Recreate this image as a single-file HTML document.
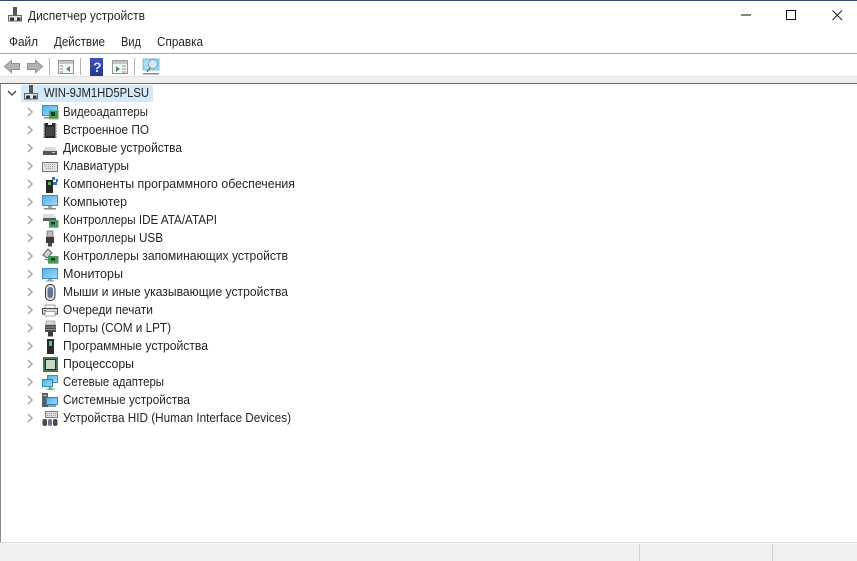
<!DOCTYPE html>
<html><head><meta charset="utf-8"><style>
html,body{margin:0;padding:0;background:#fff;width:857px;height:561px;overflow:hidden}
svg{display:block}
text{font-family:"Liberation Sans","DejaVu Sans",sans-serif;font-size:12.5px;fill:#262626}
.ic{filter:blur(.3px)}
</style></head><body>
<svg width="857" height="561" viewBox="0 0 857 561" xmlns="http://www.w3.org/2000/svg">
<defs>
<linearGradient id="scr" x1="0" y1="0" x2="1" y2="1"><stop offset="0" stop-color="#4fb0e6"/><stop offset="1" stop-color="#a4dcf5"/></linearGradient>
<linearGradient id="hlp" x1="0" y1="0" x2="0" y2="1"><stop offset="0" stop-color="#3c55b8"/><stop offset="1" stop-color="#26368c"/></linearGradient>
</defs>
<rect width="857" height="561" fill="#fff"/>
<rect width="857" height="1" fill="#2f4f72"/>
<!-- title icon -->
<g class="ic"><rect x="13" y="7" width="4" height="8" fill="#555"/><rect x="8.500" y="15.500" width="13" height="5.500" fill="#e4e4e4" stroke="#666"/><rect x="10" y="17.500" width="4" height="3" fill="#333"/><rect x="17" y="17.500" width="3.500" height="3" fill="#333"/></g>
<text x="28" y="20" textLength="117" lengthAdjust="spacingAndGlyphs">Диспетчер устройств</text>
<!-- window buttons -->
<rect x="741" y="14.500" width="10" height="1" fill="#111"/>
<rect x="786.500" y="10.500" width="9" height="9" fill="none" stroke="#111"/>
<path d="M832.500 10.500l9.500 9.500M842 10.500l-9.500 9.500" stroke="#222" fill="none"/>
<!-- menu -->
<text x="9" y="46" textLength="29" lengthAdjust="spacingAndGlyphs">Файл</text>
<text x="54" y="46" textLength="51" lengthAdjust="spacingAndGlyphs">Действие</text>
<text x="121" y="46" textLength="20" lengthAdjust="spacingAndGlyphs">Вид</text>
<text x="157" y="46" textLength="46" lengthAdjust="spacingAndGlyphs">Справка</text>
<rect y="53" width="857" height="1" fill="#a8a8a8"/>
<!-- toolbar -->
<g class="ic">
<path d="M4.500 66.500l7-6v3h8v6h-8v3z" fill="#b2b2b2" stroke="#8f8f8f"/>
<path d="M42.500 66.500l-7-6v3h-8v6h8v3z" fill="#b2b2b2" stroke="#8f8f8f"/>
<rect x="58.500" y="60.500" width="15" height="13" fill="#f6f6f6" stroke="#949494"/><rect x="59" y="61" width="14" height="3" fill="#bcc8cc"/><path d="M70 66l-4 3 4 3z" fill="#3f9a45"/><path d="M60 66h3M60 69h3M60 72h3" stroke="#8f8f8f"/>
<rect x="90" y="58" width="13" height="18" fill="url(#hlp)"/>
<rect x="112.500" y="60.500" width="15" height="13" fill="#f6f6f6" stroke="#949494"/><rect x="113" y="61" width="14" height="3" fill="#bcc8cc"/><path d="M116 66l4 3-4 3z" fill="#3f9a45"/><path d="M122 66h4M122 69h4M122 72h4" stroke="#8f8f8f"/>
<rect x="143" y="59" width="16" height="11" fill="#a5dcf2" stroke="#5ab0d8" stroke-width=".8"/>
<circle cx="153" cy="64" r="4.500" fill="#cfeaf4" stroke="#8aa6b0"/><path d="M150 68l-3 4" stroke="#666" stroke-width="1.300"/><rect x="143" y="73" width="16" height="1.500" fill="#8a8a8a"/>
</g>
<rect x="49" y="58" width="1" height="17" fill="#b0b0b0"/>
<rect x="80" y="58" width="1" height="17" fill="#b0b0b0"/>
<rect x="134" y="58" width="1" height="17" fill="#b0b0b0"/>
<text x="93" y="72" style="font-size:14px;font-weight:bold;fill:#dfe5ff">?</text>
<!-- band below toolbar -->
<rect y="76" width="857" height="7" fill="#f0f0f0"/>
<rect y="76" width="857" height="1" fill="#e2e2e2"/>
<rect y="83" width="857" height="1" fill="#6a6a6a"/>
<rect x="0" y="84" width="1" height="458" fill="#8a8a8a"/>
<!-- root -->
<rect x="21" y="85" width="132" height="17" fill="#d3e8f8"/>
<path d="M8 91l4 4 4-4" fill="none" stroke="#444" stroke-width="1.300"/>
<g class="ic" transform="translate(16,78)"><rect x="13" y="7" width="4" height="8" fill="#555"/><rect x="8.500" y="15.500" width="13" height="5.500" fill="#e4e4e4" stroke="#666"/><rect x="10" y="17.500" width="4" height="3" fill="#333"/><rect x="17" y="17.500" width="3.500" height="3" fill="#333"/></g>
<text x="44" y="97" textLength="105" lengthAdjust="spacingAndGlyphs">WIN-9JM1HD5PLSU</text>
<!-- chevrons -->
<path fill="none" stroke="#a6a6a6" stroke-width="1.500" d="M28 108l4 4-4 4M28 126l4 4-4 4M28 144l4 4-4 4M28 162l4 4-4 4M28 180l4 4-4 4M28 198l4 4-4 4M28 216l4 4-4 4M28 234l4 4-4 4M28 252l4 4-4 4M28 270l4 4-4 4M28 288l4 4-4 4M28 306l4 4-4 4M28 324l4 4-4 4M28 342l4 4-4 4M28 360l4 4-4 4M28 378l4 4-4 4M28 396l4 4-4 4M28 414l4 4-4 4"/>
<!-- icons -->
<g class="ic">
<g transform="translate(42,104)"><rect x=".5" y="1.500" width="15" height="10" fill="url(#scr)" stroke="#3d8fc0"/><rect x="2" y="13" width="8" height="1.500" fill="#8a8a8a"/><rect x="7" y="6.500" width="9.500" height="8" fill="#4a9a60"/><rect x="9" y="8" width="4" height="4" fill="#1c3a22"/><rect x="7" y="14.500" width="9.500" height="1" fill="#c9a94a"/></g>
<g transform="translate(42,122)"><rect x="2.500" y="1" width="11" height="15" fill="#2a2a2a"/><path d="M6 1h4v2H6z" fill="#eee"/><path d="M1 3h2M1 6h2M1 9h2M1 12h2M1 15h2M13 3h2M13 6h2M13 9h2M13 12h2M13 15h2" stroke="#777"/><rect x="4" y="5" width="8" height="9" fill="#444"/></g>
<g transform="translate(42,140)"><path d="M3 7h10l2 4v3H1v-3z" fill="#dcdcdc"/><rect x="1" y="11" width="14" height="4" fill="#555"/><rect x="10" y="12" width="3" height="1" fill="#a8e8a8"/></g>
<g transform="translate(42,158)"><rect x=".5" y="4.500" width="15" height="9" fill="#e2e2e2" stroke="#7c7c7c"/><path d="M2 6.500h12M2 8.500h12M4 10.500h8" stroke="#a4a4a4" stroke-dasharray="1 1"/></g>
<g transform="translate(42,176)"><rect x="4" y="4" width="7" height="13" fill="#2a2a2a"/><rect x="6" y="6" width="3" height="3" fill="#5fb16a"/><rect x="10" y="1" width="3" height="3" fill="#2b78c2"/><rect x="14" y="3" width="2" height="3" fill="#2b78c2"/><rect x="11" y="6" width="4" height="3" fill="#2b78c2"/></g>
<g transform="translate(42,194)"><rect x=".5" y="1.500" width="15" height="10" fill="url(#scr)" stroke="#3d8fc0"/><rect x="6" y="12" width="4" height="2" fill="#aaa"/><rect x="2" y="14" width="12" height="1.500" fill="#8a8a8a"/></g>
<g transform="translate(42,212)"><path d="M2 2h9l3 3v3H1V3z" fill="#dcdcdc"/><rect x="1" y="6" width="13" height="3" fill="#5c5c5c"/><rect x="7" y="8" width="9.500" height="7" fill="#4a9a60"/><rect x="9" y="10" width="4" height="2.500" fill="#1c3a22"/><rect x="7" y="15" width="9.500" height="1" fill="#c9a94a"/></g>
<g transform="translate(42,230)"><rect x="5" y="1" width="6" height="6" fill="#bbb" stroke="#666" stroke-width=".7"/><rect x="4" y="7" width="8" height="6" fill="#3a3a3a"/><rect x="6" y="13" width="4" height="3.500" fill="#4a4a4a"/></g>
<g transform="translate(42,248)"><path d="M1 7l5-6 4 4-5 5z" fill="#cfcfcf" stroke="#666"/><path d="M3 11l5 2" stroke="#777"/><rect x="6" y="8" width="10.500" height="7" fill="#4a9a60"/><rect x="9" y="10" width="4" height="2.500" fill="#1c3a22"/><rect x="6" y="15" width="10.500" height="1" fill="#c9a94a"/></g>
<g transform="translate(42,266)"><rect x=".5" y="2.500" width="15" height="10" fill="url(#scr)" stroke="#3d8fc0"/><rect x="6" y="13" width="4" height="1.500" fill="#aaa"/><rect x="4" y="14.500" width="8" height="1" fill="#8a8a8a"/></g>
<g transform="translate(42,284)"><rect x="3.500" y=".5" width="9.500" height="16" rx="4.500" fill="#dfe3ea" stroke="#333"/><rect x="5.500" y="3" width="5.500" height="11" rx="2.700" fill="#66748e"/></g>
<g transform="translate(42,302)"><rect x="3" y="3" width="10" height="4" fill="#f5f5f5" stroke="#777" stroke-width=".7"/><rect x=".5" y="6.500" width="15" height="5.500" fill="#d6d6d6" stroke="#4a4a4a"/><rect x="3" y="9.500" width="10" height="4.500" fill="#fff" stroke="#888" stroke-width=".7"/><rect x="2" y="8" width="2" height="1" fill="#36a"/></g>
<g transform="translate(42,320)"><rect x="4" y="1" width="9" height="4" fill="#d8d8d8" stroke="#888" stroke-width=".6"/><rect x="3" y="5" width="11" height="7" fill="#4a4a4a"/><path d="M3 7h11M3 9.500h11" stroke="#aaa" stroke-width=".7"/><rect x="6" y="12" width="5" height="4.500" fill="#3a3a3a"/></g>
<g transform="translate(42,338)"><rect x="5" y="1" width="7" height="15" fill="#2a2a2a"/><rect x="7" y="3" width="3" height="5" fill="#5fc16a"/></g>
<g transform="translate(42,356)"><rect x="1" y="1" width="15" height="15" fill="#47754a"/><rect x="3.500" y="3.500" width="10" height="10" fill="#ccd4cc" stroke="#2a2a2a"/></g>
<g transform="translate(42,374)"><rect x="5.500" y="1.500" width="10" height="7" fill="url(#scr)" stroke="#3d8fc0"/><rect x=".5" y="5.500" width="10" height="7" fill="url(#scr)" stroke="#2f86bb"/><path d="M4 15h9M8 12.500l-2 3h5z" fill="#5ab85a" stroke="#5ab85a" stroke-width=".7"/></g>
<g transform="translate(42,392)"><rect x="0" y="1" width="6" height="14" fill="#5c5c5c"/><rect x="1.500" y="3" width="3" height="1" fill="#ddd"/><rect x="4.500" y="5.500" width="11" height="7" fill="url(#scr)" stroke="#2f86bb"/><rect x="6" y="13" width="8" height="2" fill="#9c9c9c"/></g>
<g transform="translate(42,410)"><rect x="3.500" y="1.500" width="12" height="6" fill="#ddd" stroke="#808080"/><path d="M5 3.500h9M5 5.500h9" stroke="#a0a0a0" stroke-dasharray="1 1"/><rect x=".5" y="9" width="4.500" height="7" rx="2" fill="#4a4a4a"/><rect x="6" y="9" width="4" height="7" rx="2" fill="#66748e"/><rect x="11" y="9" width="4.500" height="7" rx="2" fill="#4a4a4a"/></g>
</g>
<!-- labels -->
<g>
<text x="63" y="116" textLength="85" lengthAdjust="spacingAndGlyphs">Видеоадаптеры</text>
<text x="63" y="134" textLength="86" lengthAdjust="spacingAndGlyphs">Встроенное ПО</text>
<text x="63" y="152" textLength="119" lengthAdjust="spacingAndGlyphs">Дисковые устройства</text>
<text x="63" y="170" textLength="66" lengthAdjust="spacingAndGlyphs">Клавиатуры</text>
<text x="63" y="188" textLength="232" lengthAdjust="spacingAndGlyphs">Компоненты программного обеспечения</text>
<text x="63" y="206" textLength="64" lengthAdjust="spacingAndGlyphs">Компьютер</text>
<text x="63" y="224" textLength="154" lengthAdjust="spacingAndGlyphs">Контроллеры IDE ATA/ATAPI</text>
<text x="63" y="242" textLength="100" lengthAdjust="spacingAndGlyphs">Контроллеры USB</text>
<text x="63" y="260" textLength="225" lengthAdjust="spacingAndGlyphs">Контроллеры запоминающих устройств</text>
<text x="63" y="278" textLength="60" lengthAdjust="spacingAndGlyphs">Мониторы</text>
<text x="63" y="296" textLength="225" lengthAdjust="spacingAndGlyphs">Мыши и иные указывающие устройства</text>
<text x="63" y="314" textLength="90" lengthAdjust="spacingAndGlyphs">Очереди печати</text>
<text x="63" y="332" textLength="108" lengthAdjust="spacingAndGlyphs">Порты (COM и LPT)</text>
<text x="63" y="350" textLength="145" lengthAdjust="spacingAndGlyphs">Программные устройства</text>
<text x="63" y="368" textLength="71" lengthAdjust="spacingAndGlyphs">Процессоры</text>
<text x="63" y="386" textLength="101" lengthAdjust="spacingAndGlyphs">Сетевые адаптеры</text>
<text x="63" y="404" textLength="127" lengthAdjust="spacingAndGlyphs">Системные устройства</text>
<text x="63" y="422" textLength="228" lengthAdjust="spacingAndGlyphs">Устройства HID (Human Interface Devices)</text>
</g>
<!-- status bar -->
<rect y="542" width="857" height="1" fill="#d8d8d8"/>
<rect y="543" width="857" height="1" fill="#fafafa"/>
<rect y="544" width="857" height="17" fill="#f0f0f0"/>
<rect x="639" y="544" width="1" height="17" fill="#d4d4d4"/>
<rect x="772" y="544" width="1" height="17" fill="#d4d4d4"/>
</svg>
</body></html>
